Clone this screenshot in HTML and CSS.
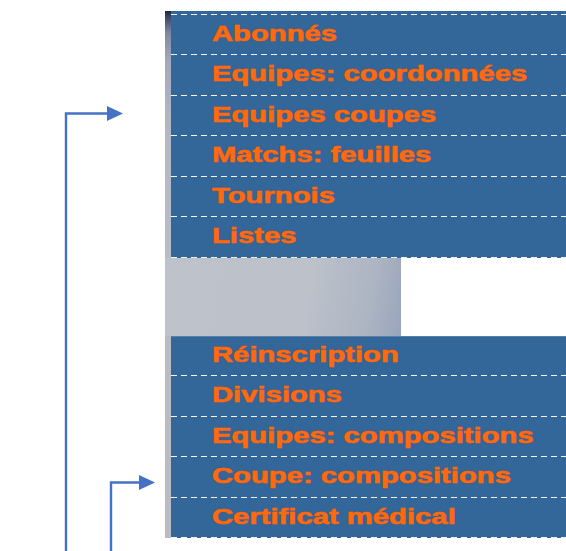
FILE: index.html
```html
<!DOCTYPE html>
<html lang="fr">
<head>
<meta charset="utf-8">
<title>Menu</title>
<link rel="stylesheet" href="styles.css">
</head>
<body>
<div class="page">
  <div class="stack">
    <div class="panel panel-top">
      <div class="strip strip-dark"></div>
      <ul class="menu menu-top">
        <li class="item first"><span class="label">Abonnés</span></li>
        <li class="item"><span class="label">Equipes: coordonnées</span></li>
        <li class="item"><span class="label">Equipes coupes</span></li>
        <li class="item"><span class="label">Matchs: feuilles</span></li>
        <li class="item"><span class="label">Tournois</span></li>
        <li class="item"><span class="label">Listes</span></li>
      </ul>
    </div>
    <div class="gap-box"></div>
    <div class="panel panel-bottom">
      <div class="strip strip-grey"></div>
      <ul class="menu menu-bottom">
        <li class="item"><span class="label">Réinscription</span></li>
        <li class="item"><span class="label">Divisions</span></li>
        <li class="item"><span class="label">Equipes: compositions</span></li>
        <li class="item"><span class="label">Coupe: compositions</span></li>
        <li class="item"><span class="label">Certificat médical</span></li>
      </ul>
    </div>
  </div>
  <svg class="arrows" width="566" height="551" viewBox="0 0 566 551" aria-hidden="true">
    <polyline points="66,551 66,113.5 108,113.5" fill="none" stroke="#4472c4" stroke-width="2.4"/>
    <polygon points="107,106 123,113.5 107,121" fill="#4472c4"/>
    <polyline points="111,551 111,482.5 140,482.5" fill="none" stroke="#4472c4" stroke-width="2.4"/>
    <polygon points="139,475 155,482.5 139,490" fill="#4472c4"/>
  </svg>
</div>
</body>
</html>
```

FILE: styles.css
```css
html, body {
  margin: 0;
  padding: 0;
  background: #ffffff;
}

.page {
  position: relative;
  width: 566px;
  height: 551px;
  overflow: hidden;
}

.stack {
  display: flex;
  flex-direction: column;
  padding-top: 11px;
  padding-left: 165px;
}

.panel {
  display: flex;
  width: 401px;
}

.strip {
  width: 6px;
  flex: none;
}

.strip-dark {
  background: linear-gradient(to bottom, #1c2640 0px, #3a4866 6px, #7d88a2 22px, #a2a9bb 50px, #b3b8c4 120px, #b8bcc5 246px);
}

.strip-grey {
  background: #b9bcc4;
}

.menu {
  flex: 1;
  margin: 0;
  padding: 0;
  list-style: none;
  background: #336699;
}

.menu-top {
  padding-top: 3px;
}

.menu-bottom {
  box-shadow: inset 0 1px 0 #5a80aa;
}

.item {
  position: relative;
  box-sizing: border-box;
  height: 40.5px;
  padding-left: 41px;
  line-height: 38px;
  white-space: nowrap;
}

.item::after {
  content: "";
  position: absolute;
  left: 0;
  right: 0;
  bottom: 0;
  height: 1px;
  background: repeating-linear-gradient(to right, #f2f4f8 0 6px, transparent 6px 10px);
}

.item.first::before {
  content: "";
  position: absolute;
  left: 0;
  right: 0;
  top: 0;
  height: 1px;
  background: repeating-linear-gradient(to right, #f2f4f8 0 6px, transparent 6px 10px);
}

.item.first {
  padding-top: 1px;
  height: 41px;
}

.label {
  display: inline-block;
  font-family: "Liberation Sans", Arial, sans-serif;
  font-weight: bold;
  font-size: 21.5px;
  color: #ff6a10;
  -webkit-text-stroke: 0.5px #ff6a10;
  text-shadow: 0 0 1px #a8401c;
  transform: scaleX(1.36);
  transform-origin: left center;
}

.gap-box {
  width: 236px;
  height: 78px;
  background: linear-gradient(100deg, #bec2ca 0%, #bcc1ca 60%, #adb5c3 85%, #98a5bb 100%);
}

.arrows {
  position: absolute;
  left: 0;
  top: 0;
  pointer-events: none;
}
```
